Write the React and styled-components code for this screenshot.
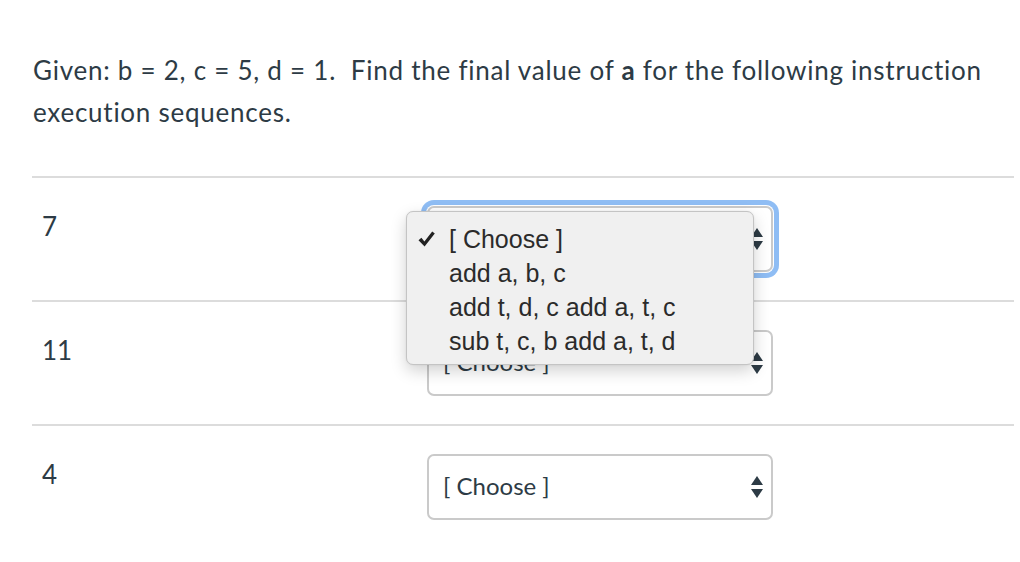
import React from 'react';
import styled, { createGlobalStyle } from 'styled-components';

const GlobalStyle = createGlobalStyle`
  html, body {
    margin: 0;
    padding: 0;
    background: #fff;
  }
  body {
    font-family: Lato, "Noto Sans", sans-serif;
    color: #2d3b45;
  }
  * {
    box-sizing: border-box;
  }
`;

const Page = styled.div`
  width: 1020px;
  height: 562px;
  overflow: hidden;
  padding: 49px 6px 0 32px;
`;

const Question = styled.p`
  margin: 0 0 43px 1px;
  font-size: 26px;
  line-height: 42px;
  letter-spacing: 0.75px;

  strong {
    font-weight: 700;
  }
`;

const Row = styled.div`
  display: flex;
  align-items: flex-start;
  border-top: 2px solid #dcdcdc;
  padding: 28px 0;
`;

const Label = styled.div`
  width: 395px;
  padding-left: 10px;
  margin-top: 5px;
  font-size: 26px;
  line-height: 31px;
`;

const SelectWrap = styled.div`
  position: relative;
  width: 346px;
  height: 66px;
`;

const Select = styled.select`
  appearance: none;
  width: 100%;
  height: 100%;
  border: 2px solid #cacaca;
  border-radius: 7px;
  background: #fff;
  padding: 0 0 4px 14px;
  font-family: Lato, "Noto Sans", sans-serif;
  font-size: 24px;
  color: #2d3b45;
  outline: none;
  box-shadow: ${(p) =>
    p.$focused ? '0 0 0 1px #fff, 0 0 0 6px #8fbdf4' : 'none'};
`;

const Arrows = styled.svg`
  position: absolute;
  right: 10px;
  top: 50%;
  transform: translateY(-50%);
  pointer-events: none;
`;

const Menu = styled.ul`
  position: absolute;
  left: -21px;
  top: 5px;
  width: 348px;
  margin: 0;
  padding: 10px 0 6px;
  list-style: none;
  background: #f0f0f0;
  border: 1px solid #c4c4c4;
  border-radius: 7px;
  box-shadow: 0 6px 16px rgba(0, 0, 0, 0.18), 0 0 2px rgba(0, 0, 0, 0.08);
  z-index: 2;
`;

const MenuItem = styled.li`
  position: relative;
  height: 34px;
  line-height: 34px;
  padding-left: 42px;
  font-family: "Liberation Sans", Arial, sans-serif;
  font-size: 25px;
  color: #2b2b2b;
  white-space: nowrap;
`;

const Check = styled.svg`
  position: absolute;
  left: 11px;
  top: 9px;
`;

const OPTIONS = [
  '[ Choose ]',
  'add a, b, c',
  'add t, d, c add a, t, c',
  'sub t, c, b add a, t, d',
];

const ROWS = [
  { label: '7', open: true },
  { label: '11' },
  { label: '4' },
];

const ArrowIcon = () => (
  <Arrows width="12" height="22" viewBox="0 0 12 22">
    <path d="M6 0 L12 9 L0 9 Z" fill="#2d3b45" />
    <path d="M0 13 L12 13 L6 22 Z" fill="#2d3b45" />
  </Arrows>
);

const Dropdown = ({ open }) => (
  <SelectWrap>
    <Select $focused={open} defaultValue="">
      <option value="">[ Choose ]</option>
      {OPTIONS.slice(1).map((o) => (
        <option key={o}>{o}</option>
      ))}
    </Select>
    <ArrowIcon />
    {open && (
      <Menu>
        {OPTIONS.map((o, i) => (
          <MenuItem key={o}>
            {i === 0 && (
              <Check width="17" height="16" viewBox="0 0 17 16">
                <path
                  d="M0.5 9.2 L3.4 6.8 L6.4 10.4 L14.2 0.6 L16.8 2.6 L6.6 15.4 Z"
                  fill="#222"
                />
              </Check>
            )}
            {o}
          </MenuItem>
        ))}
      </Menu>
    )}
  </SelectWrap>
);

const App = () => (
  <>
    <GlobalStyle />
    <Page>
      <Question>
        Given: b = 2, c = 5, d = 1.&nbsp; Find the final value of <strong>a</strong>{' '}
        for the following instruction execution sequences.
      </Question>
      {ROWS.map((r) => (
        <Row key={r.label}>
          <Label>{r.label}</Label>
          <Dropdown open={r.open} />
        </Row>
      ))}
    </Page>
  </>
);

export default App;
